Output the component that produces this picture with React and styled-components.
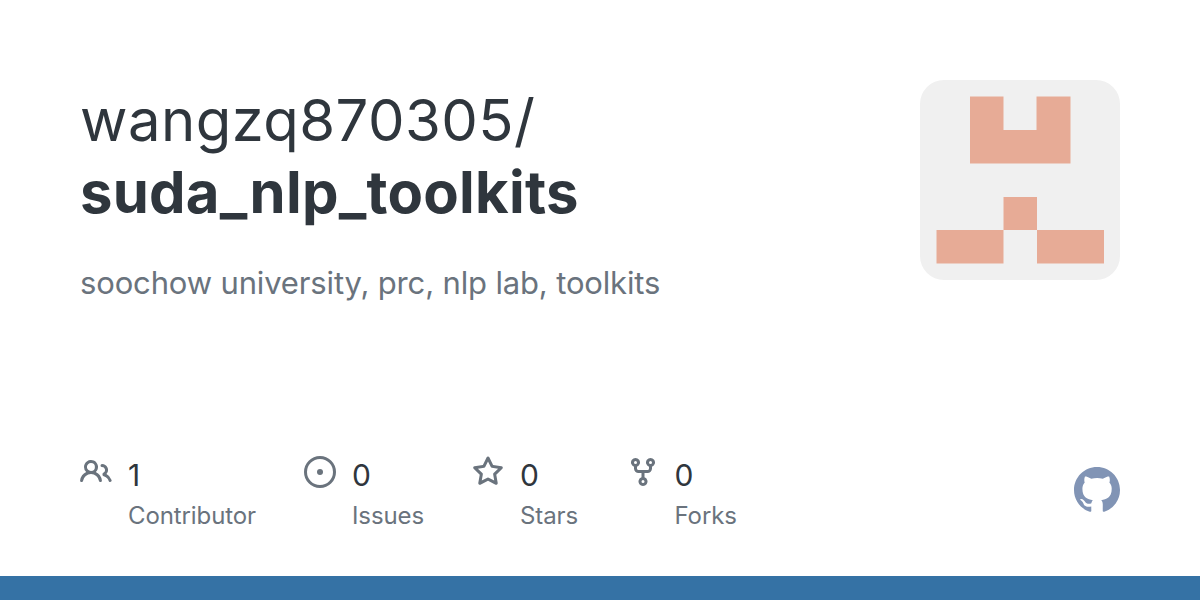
import styled, { createGlobalStyle } from "styled-components"

const stats = [
    {
        paths: ["M2 5.5a3.5 3.5 0 1 1 5.898 2.549 5.508 5.508 0 0 1 3.034 4.084.75.75 0 1 1-1.482.235 4 4 0 0 0-7.9 0 .75.75 0 0 1-1.482-.236A5.507 5.507 0 0 1 3.102 8.05 3.493 3.493 0 0 1 2 5.5ZM11 4a3.001 3.001 0 0 1 2.22 5.018 5.01 5.01 0 0 1 2.56 3.012.749.749 0 0 1-.885.954.752.752 0 0 1-.549-.514 3.507 3.507 0 0 0-2.522-2.372.75.75 0 0 1-.574-.73v-.352a.75.75 0 0 1 .416-.672A1.5 1.5 0 0 0 11 5.5.75.75 0 0 1 11 4Zm-5.5-.5a2 2 0 1 0-.001 3.999A2 2 0 0 0 5.5 3.5Z"],
        value: "1", label: "Contributor", width: 224,
    },
    {
        paths: ["M8 9.5a1.5 1.5 0 1 0 0-3 1.5 1.5 0 0 0 0 3Z", "M8 0a8 8 0 1 1 0 16A8 8 0 0 1 8 0ZM1.5 8a6.5 6.5 0 1 0 13 0 6.5 6.5 0 0 0-13 0Z"],
        value: "0", label: "Issues", width: 168,
    },
    {
        paths: ["M8 .25a.75.75 0 0 1 .673.418l1.882 3.815 4.21.612a.75.75 0 0 1 .416 1.279l-3.046 2.97.719 4.192a.751.751 0 0 1-1.088.791L8 12.347l-3.766 1.98a.75.75 0 0 1-1.088-.79l.72-4.194L.818 6.374a.75.75 0 0 1 .416-1.28l4.21-.611L7.327.668A.75.75 0 0 1 8 .25Zm0 2.445L6.615 5.5a.75.75 0 0 1-.564.41l-3.097.45 2.24 2.184a.75.75 0 0 1 .216.664l-.528 3.084 2.769-1.456a.75.75 0 0 1 .698 0l2.77 1.456-.53-3.084a.75.75 0 0 1 .216-.664l2.24-2.183-3.096-.45a.75.75 0 0 1-.564-.41L8 2.694Z"],
        value: "0", label: "Stars", width: 154.5,
    },
    {
        paths: ["M5 5.372v.878c0 .414.336.75.75.75h4.5a.75.75 0 0 0 .75-.75v-.878a2.25 2.25 0 1 1 1.5 0v.878a2.25 2.25 0 0 1-2.25 2.25h-1.5v2.128a2.251 2.251 0 1 1-1.5 0V8.5h-1.5A2.25 2.25 0 0 1 3.5 6.25v-.878a2.25 2.25 0 1 1 1.5 0ZM5 3.25a.75.75 0 1 0-1.5 0 .75.75 0 0 0 1.5 0Zm6.75.75a.75.75 0 1 0 0-1.5.75.75 0 0 0 0 1.5Zm-3 8.75a.75.75 0 1 0-1.5 0 .75.75 0 0 0 1.5 0Z"],
        value: "0", label: "Forks", width: 120,
    },
]

export default function App() {
    return (
        <>
            <GlobalStyle />
            <Card>
                <Main>
                    <Header>
                        <Heading>
                            <Title>wangzq870305/<br /><strong>suda_nlp_toolkits</strong></Title>
                            <Description>soochow university, prc, nlp lab, toolkits</Description>
                        </Heading>
                        <Avatar viewBox="0 0 200 200">
                            <rect width="200" height="200" rx="24" fill="#f0f0f0" />
                            <path fill="#e7ab96" d="M50 16.5h33.5V50h33V16.5H150.500V83.500H50zM83.500 117H117V150H83.500zM16.500 150H83.500V183.500H16.500zM117 150H184V183.500H117z" />
                        </Avatar>
                    </Header>
                    <Footer>
                        <Stats>
                            {stats.map(s => (
                                <Stat key={s.label} $width={s.width}>
                                    <StatIcon viewBox="0 0 16 16">
                                        {s.paths.map(d => <path key={d} fill="currentColor" d={d} />)}
                                    </StatIcon>
                                    <div>
                                        <Value>{s.value}</Value>
                                        <Label>{s.label}</Label>
                                    </div>
                                </Stat>
                            ))}
                        </Stats>
                        <Logo viewBox="0 0 16 16">
                            <path fill="currentColor" d="M8 0C3.58 0 0 3.58 0 8c0 3.540 2.290 6.530 5.470 7.590.4.070.55-.17.55-.38 0-.19-.01-.82-.01-1.490-2.010.37-2.530-.49-2.690-.94-.09-.23-.48-.94-.82-1.130-.28-.15-.68-.52-.01-.53.63-.01 1.080.58 1.230.82.72 1.210 1.870.87 2.330.66.070-.52.28-.87.51-1.070-1.780-.2-3.640-.89-3.640-3.950 0-.87.31-1.590.82-2.150-.08-.2-.36-1.020.08-2.120 0 0 .67-.21 2.200.82.64-.18 1.320-.27 2-.27.68 0 1.360.09 2 .27 1.530-1.040 2.200-.82 2.200-.82.44 1.100.16 1.920.08 2.120.51.56.82 1.270.82 2.150 0 3.070-1.870 3.750-3.650 3.950.29.25.54.73.54 1.480 0 1.070-.01 1.930-.01 2.200 0 .21.15.46.55.38A8.013 8.013 0 0016 8c0-4.420-3.580-8-8-8z" />
                        </Logo>
                    </Footer>
                </Main>
                <Bar />
            </Card>
        </>
    )
}

const GlobalStyle = createGlobalStyle`
    html, body {
        margin: 0;
        background: #fff;
    }
    body {
        font-family: Inter, "Liberation Sans", sans-serif;
    }
`
const Card = styled.div`
    width: 1200px;
    height: 600px;
    display: flex;
    flex-direction: column;
    overflow: hidden;
`
const Main = styled.div`
    flex: 1;
    box-sizing: border-box;
    padding: 80px 80px 0;
    display: flex;
    flex-direction: column;
    justify-content: space-between;
`
const Header = styled.div`
    display: flex;
    justify-content: space-between;
    align-items: flex-start;
`
const Heading = styled.div`
    display: flex;
    flex-direction: column;
`
const Title = styled.div`
    font-size: 58px;
    line-height: 72px;
    margin-top: 4px;
    letter-spacing: 0.45px;
    color: #2f363d;
    strong {
        font-weight: 700;
        letter-spacing: 0.24px;
    }
`
const Description = styled.div`
    font-size: 31px;
    line-height: 40px;
    margin-top: 35px;
    letter-spacing: -0.15px;
    color: #6a737d;
`
const Avatar = styled.svg`
    width: 200px;
    height: 200px;
`
const Footer = styled.div`
    display: flex;
    justify-content: space-between;
    align-items: flex-start;
    padding-bottom: 44px;
`
const Stats = styled.div`
    display: flex;
`
const Stat = styled.div`
    width: ${props => props.$width}px;
    display: flex;
    gap: 16px;
`
const StatIcon = styled.svg`
    display: block;
    width: 32px;
    height: 32px;
    color: #6a737d;
`
const Value = styled.div`
    font-size: 30px;
    line-height: 36px;
    margin-top: 1px;
    color: #2f363d;
`
const Label = styled.div`
    font-size: 24px;
    line-height: 32px;
    margin-top: 7px;
    letter-spacing: -0.1px;
    color: #6a737d;
`
const Logo = styled.svg`
    display: block;
    width: 46px;
    height: 46px;
    margin-top: 11px;
    color: #8194b5;
`
const Bar = styled.div`
    height: 24px;
    background: #3572a5;
`
